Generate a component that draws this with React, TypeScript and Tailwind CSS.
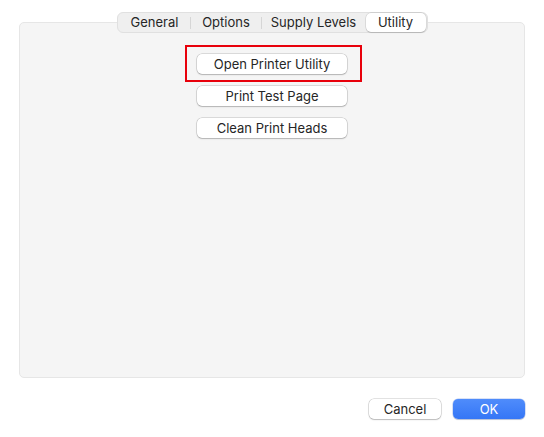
import React from "react";

const TABS = [
  { label: "General", width: "w-[72px]" },
  { label: "Options", width: "w-[71px]" },
  { label: "Supply Levels", width: "w-[104px]" },
  { label: "Utility", width: "w-[60px]" },
];

const ACTIVE = "Utility";

function MacButton({ children, className = "" }: { children: React.ReactNode; className?: string }) {
  return (
    <button
      className={
        "block h-[20px] rounded-[5px] bg-white text-[13px] leading-none text-[#262626] shadow-[0_0_0_0.5px_rgba(0,0,0,0.22),0_1px_1.5px_rgba(0,0,0,0.18)] " +
        className
      }
    >
      {children}
    </button>
  );
}

export default function App() {
  return (
    <div className="min-h-screen bg-white font-['Inter','Liberation_Sans',sans-serif] text-[#262626] px-[19px] pt-[22px] pb-[19px] flex flex-col">
      {/* tab panel */}
      <div className="h-[356px] rounded-[5px] bg-[#f5f5f5] border border-[#e6e6e6] flex flex-col items-center">
        <div className="-mt-[11px] flex items-center h-[21px] rounded-[6px] bg-[#efefef] border border-[#e0e0e0] px-[1px]">
          {TABS.map((t, i) => {
            const active = t.label === ACTIVE;
            const nextActive = TABS[i + 1]?.label === ACTIVE;
            const showSep = i < TABS.length - 1 && !active && !nextActive;
            return (
              <div key={t.label} className="relative flex items-center">
                <div
                  className={
                    "h-[19px] flex items-center justify-center text-[13px] " +
                    t.width +
                    (active ? " bg-white rounded-[5px] shadow-[0_0_0_0.5px_rgba(0,0,0,0.15),0_1px_1px_rgba(0,0,0,0.12)]" : "")
                  }
                >
                  {t.label}
                </div>
                {showSep && <div className="absolute right-0 w-px h-[12px] bg-[#d6d6d6]" />}
              </div>
            );
          })}
        </div>

        <div className="mt-[21px] flex flex-col gap-[12px]">
          <div className="relative flex">
            <MacButton className="w-[150px]">Open Printer Utility</MacButton>
            <div className="absolute -left-[12px] -right-[15px] -top-[9px] -bottom-[8px] border-2 border-[#e8000b] pointer-events-none" />
          </div>
          <MacButton className="w-[150px]">Print Test Page</MacButton>
          <MacButton className="w-[150px]">Clean Print Heads</MacButton>
        </div>
      </div>

      {/* footer buttons */}
      <div className="mt-[21px] flex justify-end gap-[12px]">
        <MacButton className="w-[72px]">Cancel</MacButton>
        <button className="w-[72px] h-[20px] rounded-[5px] bg-gradient-to-b from-[#4f8cfb] to-[#3576f6] text-white text-[13px] leading-none shadow-[0_0_0_0.5px_rgba(0,60,200,0.3),0_1px_1px_rgba(0,0,0,0.15)]">
          OK
        </button>
      </div>
    </div>
  );
}
